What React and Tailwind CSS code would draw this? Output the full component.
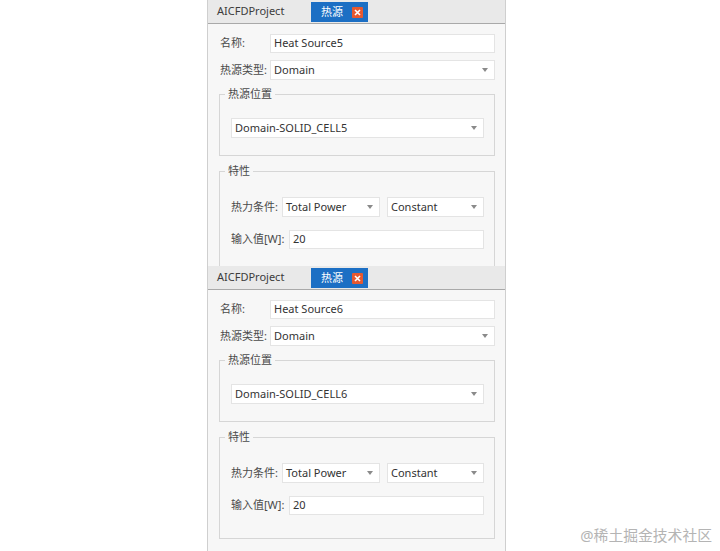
const font = { fontFamily: '"Noto Sans", "Noto Sans CJK SC", sans-serif' };

function Arrow() {
  return (
    <svg width="6" height="4" viewBox="0 0 6 4" className="shrink-0">
      <path d="M0 0 L6 0 L3 4 Z" fill="#8a8a8a" />
    </svg>
  );
}

function Select({ value, className }) {
  return (
    <div className={"h-[20px] flex items-center justify-between bg-white border border-[#e4e4e4] pl-[3px] pr-[6px] text-[#333] " + className}>
      <span className="whitespace-nowrap">{value}</span>
      <Arrow />
    </div>
  );
}

function Input({ value, className }) {
  return (
    <div className={"h-[19px] flex items-center bg-white border border-[#e4e4e4] pl-[3px] text-[#333] " + className}>
      {value}
    </div>
  );
}

function Label({ children, className }) {
  return <span className={"shrink-0 whitespace-nowrap text-[#4a4a4a] " + className}>{children}</span>;
}

function Panel({ n, className }) {
  return (
    <div className={"flex flex-col border-l border-r border-[#cfcfcf] bg-[#f7f7f7] overflow-hidden " + className}>
      {/* tab strip */}
      <div className="h-[24px] shrink-0 flex items-end bg-[#e9e9e9] border-b border-[#a9a9a9]">
        <div className="h-full w-[103px] flex items-center pl-[9px] text-[#3c3c3c]">AICFDProject</div>
        <div className="h-[20px] mb-[1px] w-[57px] bg-[#1c6fc4] flex items-center pl-[10px] gap-[9px] text-white">
          <span>热源</span>
          <div className="w-[11px] h-[11px] bg-[#e6582f] rounded-[1px] flex items-center justify-center">
            <svg width="7" height="7" viewBox="0 0 7 7">
              <path d="M1 1 L6 6 M6 1 L1 6" stroke="#fff" strokeWidth="1.6" />
            </svg>
          </div>
        </div>
      </div>

      <div className="flex flex-col pl-[11px] pr-[10px] pt-[10px]">
        <div className="flex items-center">
          <Label className="w-[51px] pl-[1px]">名称:</Label>
          <Input value={"Heat Source" + n} className="flex-1" />
        </div>
        <div className="flex items-center mt-[7px]">
          <Label className="w-[51px] pl-[1px]">热源类型:</Label>
          <Select value="Domain" className="flex-1" />
        </div>

        <fieldset className="mt-[6px] border border-[#d6d6d6] pl-[5px] pr-[10px] pb-[17px]">
          <legend className="px-[3px] h-[16px] leading-[16px] text-[#4a4a4a]">热源位置</legend>
          <div className="pl-[6px] mt-[16px]">
            <Select value={"Domain-SOLID_CELL" + n} />
          </div>
        </fieldset>

        <fieldset className="mt-[7px] border border-[#d6d6d6] pl-[5px] pr-[10px] pb-[23px]">
          <legend className="px-[3px] h-[16px] leading-[16px] text-[#4a4a4a]">特性</legend>
          <div className="pl-[6px] mt-[18px] flex flex-col">
            <div className="flex items-center">
              <Label className="w-[51px]">热力条件:</Label>
              <Select value="Total Power" className="w-[98px]" />
              <Select value="Constant" className="ml-[7px] flex-1" />
            </div>
            <div className="flex items-center mt-[13px]">
              <Label className="w-[58px]">输入值[W]:</Label>
              <Input value="20" className="flex-1" />
            </div>
          </div>
        </fieldset>
      </div>
    </div>
  );
}

export default function App() {
  return (
    <div className="w-[720px] h-[551px] bg-white flex flex-col relative overflow-hidden text-[11px]" style={font}>
      <div className="ml-[207px] w-[299px] flex flex-col">
        <Panel n={5} className="h-[266px]" />
        <Panel n={6} className="h-[285px]" />
      </div>
      <div className="absolute right-[8px] bottom-[5px] text-[14.8px] text-[#b4b4b4]">@稀土掘金技术社区</div>
    </div>
  );
}
